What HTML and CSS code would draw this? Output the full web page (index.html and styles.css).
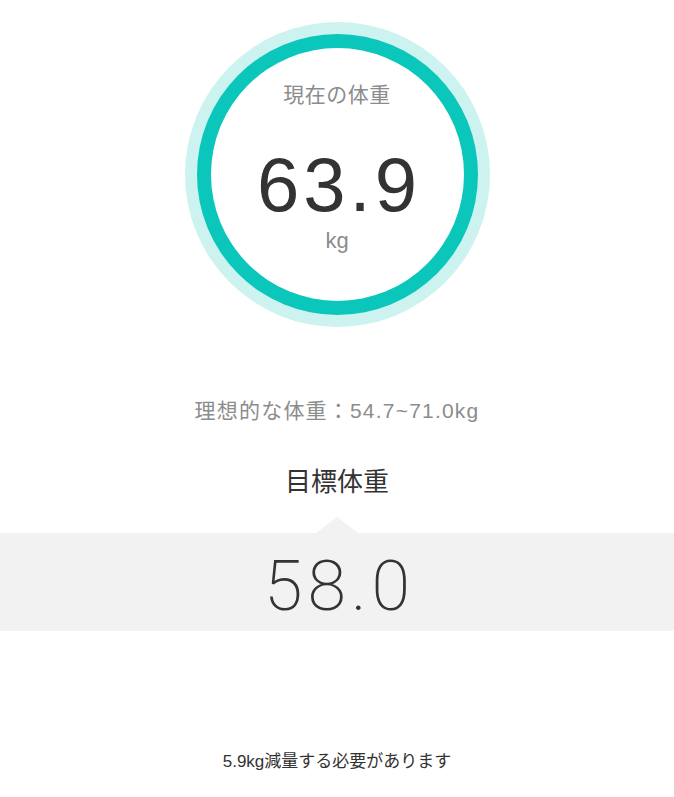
FILE: index.html
```html
<!DOCTYPE html>
<html lang="ja">
<head>
    <meta charset="UTF-8">
    <meta name="viewport" content="width=device-width, initial-scale=1.0">
    <title>目標体重</title>
    <link rel="stylesheet" href="styles.css">
</head>
<body>
    <div class="page">
        <div class="gauge">
            <div class="gauge-outer">
                <div class="gauge-ring">
                    <div class="gauge-face">
                        <div class="gauge-label">現在の体重</div>
                        <div class="gauge-value">63.9</div>
                        <div class="gauge-unit">kg</div>
                    </div>
                </div>
            </div>
        </div>

        <p class="ideal">理想的な体重：54.7~71.0kg</p>

        <h2 class="target-title">目標体重</h2>
        <div class="target-box">
            <div class="target-value">58.0</div>
        </div>

        <p class="note">5.9kg減量する必要があります</p>
    </div>
</body>
</html>
```

FILE: styles.css
```css
body {
    margin: 0;
    padding: 0;
    background-color: #fff;
    font-family: "Liberation Sans", "Noto Sans CJK JP", sans-serif;
    color: #333;
}

.page {
    width: 674px;
    height: 797px;
    display: flex;
    flex-direction: column;
    align-items: stretch;
}

.gauge {
    display: flex;
    justify-content: center;
    padding-top: 22px;
}

.gauge-outer {
    width: 305px;
    height: 305px;
    box-sizing: border-box;
    padding: 12px;
    border-radius: 50%;
    background-color: #cdf3f0;
}

.gauge-ring {
    width: 100%;
    height: 100%;
    box-sizing: border-box;
    padding: 14px;
    border-radius: 50%;
    background-color: #0bc6ba;
}

.gauge-face {
    width: 100%;
    height: 100%;
    border-radius: 50%;
    background-color: #fff;
    display: flex;
    flex-direction: column;
    align-items: center;
}

.gauge-label {
    margin-top: 35px;
    font-size: 21px;
    line-height: 24px;
    letter-spacing: 0.5px;
    color: #8c8c8c;
}

.gauge-value {
    margin-top: 38px;
    font-size: 76px;
    line-height: 80px;
    letter-spacing: 4px;
    margin-right: -4px;
    color: #333;
}

.gauge-unit {
    margin-top: 4px;
    font-size: 22px;
    line-height: 24px;
    color: #8c8c8c;
}

.ideal {
    margin: 70px 0 0;
    text-align: center;
    font-size: 21px;
    line-height: 28px;
    letter-spacing: 1.2px;
    color: #8c8c8c;
}

.target-title {
    margin: 40px 0 0;
    text-align: center;
    font-size: 26px;
    font-weight: normal;
    line-height: 34px;
    color: #333;
}

.target-box {
    position: relative;
    margin-top: 34px;
    height: 98px;
    background-color: #f2f2f2;
    display: flex;
    align-items: center;
    justify-content: center;
}

.target-box::before {
    content: "";
    position: absolute;
    top: -16px;
    left: 50%;
    margin-left: -21px;
    border-left: 21px solid transparent;
    border-right: 21px solid transparent;
    border-bottom: 16px solid #f2f2f2;
}

.target-value {
    font-family: Roboto, "Liberation Sans", sans-serif;
    font-weight: 200;
    font-size: 70px;
    line-height: 80px;
    letter-spacing: 5px;
    margin-right: -5px;
    margin-top: 8px;
    color: #333;
}

.note {
    margin: 119px 0 0;
    text-align: center;
    font-size: 17px;
    line-height: 24px;
    color: #333;
}
```
